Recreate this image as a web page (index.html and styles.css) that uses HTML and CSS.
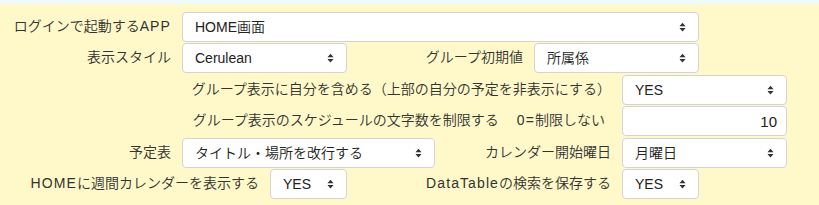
FILE: index.html
```html
<!DOCTYPE html>
<html lang="ja">
<head>
<meta charset="utf-8">
<link rel="stylesheet" href="styles.css">
</head>
<body>
<div class="panel">
  <form class="settings">
    <label class="lbl c0 s2">ログインで起動する<span class="en">APP</span></label>
    <div class="sel c2 s6"><select><option>HOME画面</option></select><svg class="arr" viewBox="0 0 8 10"><path d="M4 0 L7.5 4 L0.5 4 Z M4 10 L7.5 6 L0.5 6 Z"/></svg></div>

    <label class="lbl c0 s2">表示スタイル</label>
    <div class="sel c2 s2"><select><option>Cerulean</option></select><svg class="arr" viewBox="0 0 8 10"><path d="M4 0 L7.5 4 L0.5 4 Z M4 10 L7.5 6 L0.5 6 Z"/></svg></div>
    <label class="lbl c4 s2">グループ初期値</label>
    <div class="sel c6 s2"><select><option>所属係</option></select><svg class="arr" viewBox="0 0 8 10"><path d="M4 0 L7.5 4 L0.5 4 Z M4 10 L7.5 6 L0.5 6 Z"/></svg></div>

    <label class="lbl c0 s7">グループ表示に自分を含める（上部の自分の予定を非表示にする）</label>
    <div class="sel c7 s2"><select><option>YES</option></select><svg class="arr" viewBox="0 0 8 10"><path d="M4 0 L7.5 4 L0.5 4 Z M4 10 L7.5 6 L0.5 6 Z"/></svg></div>

    <label class="lbl c0 s7 pad">グループ表示のスケジュールの文字数を制限する　<span class="en gap">0=</span>制限しない</label>
    <input class="num c7 s2" type="text" value="10">

    <label class="lbl c0 s2">予定表</label>
    <div class="sel c2 s3"><select><option>タイトル・場所を改行する</option></select><svg class="arr" viewBox="0 0 8 10"><path d="M4 0 L7.5 4 L0.5 4 Z M4 10 L7.5 6 L0.5 6 Z"/></svg></div>
    <label class="lbl c5 s2">カレンダー開始曜日</label>
    <div class="sel c7 s2"><select><option>月曜日</option></select><svg class="arr" viewBox="0 0 8 10"><path d="M4 0 L7.5 4 L0.5 4 Z M4 10 L7.5 6 L0.5 6 Z"/></svg></div>

    <label class="lbl c0 s3"><span class="en">HOME</span>に週間カレンダーを表示する</label>
    <div class="sel c3 s1"><select><option>YES</option></select><svg class="arr" viewBox="0 0 8 10"><path d="M4 0 L7.5 4 L0.5 4 Z M4 10 L7.5 6 L0.5 6 Z"/></svg></div>
    <label class="lbl c4 s3"><span class="en">DataTable</span>の検索を保存する</label>
    <div class="sel c7 s1"><select><option>YES</option></select><svg class="arr" viewBox="0 0 8 10"><path d="M4 0 L7.5 4 L0.5 4 Z M4 10 L7.5 6 L0.5 6 Z"/></svg></div>
  </form>
</div>
</body>
</html>
```
FILE: styles.css
```css
html, body {
  margin: 0;
  padding: 0;
  background: #effafa;
}
body {
  padding-top: 4px;
  font-family: "Liberation Sans", "Noto Sans CJK JP", sans-serif;
  font-size: 14px;
  color: #333;
}
.panel {
  background: #fff9c9;
  height: 201px;
  padding: 8px 0 0 6px;
  box-sizing: border-box;
}
.settings {
  display: grid;
  grid-template-columns: repeat(9, 77px);
  grid-auto-rows: 30px;
  column-gap: 11px;
  row-gap: 1.4px;
  align-items: center;
}
.lbl {
  text-align: right;
  white-space: nowrap;
  line-height: 20px;
  margin-top: -2px;
  font-weight: 350;
}
.lbl.pad {
  padding-right: 6px;
}
.en {
  letter-spacing: 1.1px;
}
.en.gap {
  margin-left: 4px;
}
.c0 { grid-column-start: 1; }
.c2 { grid-column-start: 3; }
.c3 { grid-column-start: 4; }
.c4 { grid-column-start: 5; }
.c5 { grid-column-start: 6; }
.c6 { grid-column-start: 7; }
.c7 { grid-column-start: 8; }
.s1 { grid-column-end: span 1; }
.s2 { grid-column-end: span 2; }
.s3 { grid-column-end: span 3; }
.s6 { grid-column-end: span 6; }
.s7 { grid-column-end: span 7; }
.sel {
  position: relative;
  height: 30px;
}
.sel select, .num {
  -webkit-appearance: none;
  appearance: none;
  width: 100%;
  height: 30px;
  box-sizing: border-box;
  margin: 0;
  border: 1px solid #d3d3d3;
  border-radius: 4px;
  background: #fff;
  font-family: "Liberation Sans", "Noto Sans CJK JP", sans-serif;
  font-size: 14px;
  font-weight: 350;
  color: #222;
  padding: 0 24px 0 12px;
  outline: none;
}
.num {
  text-align: right;
  padding: 0 9px 0 12px;
  font-size: 15px;
}
.arr {
  position: absolute;
  right: 13px;
  top: 10px;
  width: 7px;
  height: 10px;
  fill: #333;
  pointer-events: none;
}
```
